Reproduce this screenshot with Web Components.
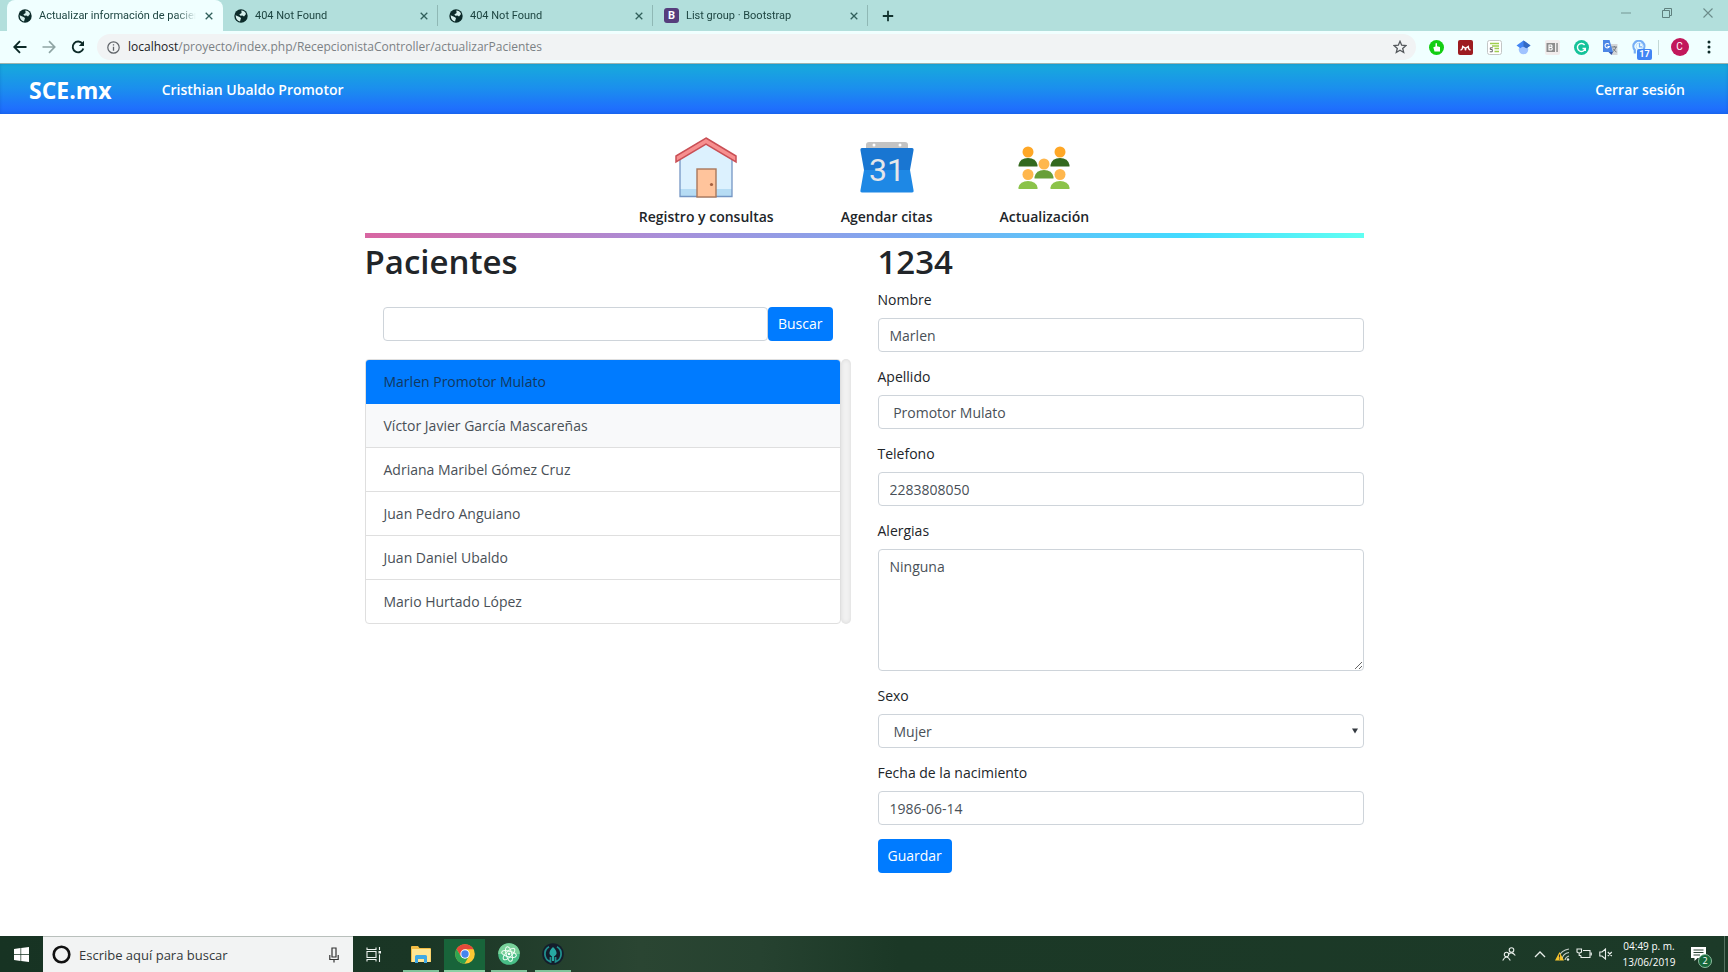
<!DOCTYPE html>
<html lang="es">
<head>
<meta charset="utf-8">
<meta name="viewport" content="width=device-width, initial-scale=1">
<title>Actualizar información de pacientes</title>
<style>
  html { height: 100%; }
  body {
    margin: 0;
    min-height: 100%;
    display: flex;
    flex-direction: column;
    background: #fff;
    color: #212529;
    font: 14px/22px "Open Sans", "Noto Sans", sans-serif;
  }
</style>
</head>
<body>

<browser-frame>
  <browser-tab active><web-globe slot="icon"></web-globe>Actualizar información de pacientes</browser-tab>
  <browser-tab><web-globe slot="icon"></web-globe>404 Not Found</browser-tab>
  <browser-tab><web-globe slot="icon"></web-globe>404 Not Found</browser-tab>
  <browser-tab><bootstrap-mark slot="icon"></bootstrap-mark>List group · Bootstrap</browser-tab>
</browser-frame>

<site-header brand="SCE.mx" user="Cristhian Ubaldo Promotor"></site-header>

<page-body>
  <section-link slot="sections" label="Registro y consultas">
    <svg width="62" height="64" viewBox="0 0 62 64">
      <path d="M5 21 31 4 57 21V60H5Z" fill="#dcf1fe"/>
      <path d="M5 53H57V60H5Z" fill="#b6dcf4"/>
      <path d="M5 21V60.500H57V21" fill="none" stroke="#7496c4" stroke-width="1.300"/>
      <rect x="22" y="33" width="19" height="28" fill="#ffc49c" stroke="#a9785c" stroke-width="1.400"/>
      <circle cx="36.500" cy="48.500" r="1.600" fill="#a4603f"/>
      <path d="M31 2 61 20V26L31 8 1 26V20Z" fill="#f78f8f" stroke="#c94f55" stroke-width="1.500"/>
    </svg>
  </section-link>
  <section-link slot="sections" label="Agendar citas">
    <svg width="54" height="64" viewBox="0 0 54 64">
      <path d="M6 16V9Q6 6 9 6H45Q48 6 48 9V16Z" fill="#c3c3c3"/>
      <circle cx="14" cy="9" r="1.500" fill="#fff"/><circle cx="40" cy="9" r="1.500" fill="#fff"/>
      <path d="M2 12H52Q54 12 53.500 14.500L50 34H4L.5 14.500Q0 12 2 12Z" fill="#1976d2"/>
      <path d="M4 34H50L53.500 54Q54 56.500 52 56.500H2Q0 56.500 .5 54Z" fill="#1e88e5"/>
      <text x="27" y="45" text-anchor="middle" font-family="Roboto, sans-serif" font-size="32" font-weight="400" fill="#e4e6ea">31</text>
    </svg>
  </section-link>
  <section-link slot="sections" label="Actualización">
    <svg width="52" height="64" viewBox="0 0 52 64">
      <g fill="#ffa726"><circle cx="10" cy="16" r="5.500"/><circle cx="42" cy="16" r="5.500"/></g>
      <g fill="#33691e"><path d="M.5 30.500V29Q2 22 10 22T19.500 29V30.500Z"/><path d="M32.500 30.500V29Q34 22 42 22T51.500 29V30.500Z"/></g>
      <g fill="#ffb74d"><circle cx="26" cy="28" r="5.500"/><circle cx="10" cy="38.500" r="5.500"/><circle cx="42" cy="38.500" r="5.500"/></g>
      <path d="M16.500 42.500V41Q18 34 26 34T35.500 41V42.500Z" fill="#689f38"/>
      <g fill="#8bc34a"><path d="M.5 53V51.500Q2 45 10 45T19.500 51.500V53Z"/><path d="M32.500 53V51.500Q34 45 42 45T51.500 51.500V53Z"/></g>
    </svg>
  </section-link>

  <patient-list slot="list" heading="Pacientes">
    <patient-item state="active">Marlen Promotor Mulato</patient-item>
    <patient-item state="hover">Víctor Javier García Mascareñas</patient-item>
    <patient-item>Adriana Maribel Gómez Cruz</patient-item>
    <patient-item>Juan Pedro Anguiano</patient-item>
    <patient-item>Juan Daniel Ubaldo</patient-item>
    <patient-item>Mario Hurtado López</patient-item>
  </patient-list>

  <patient-form slot="form" heading="1234">
    <form-field label="Nombre" value="Marlen"></form-field>
    <form-field label="Apellido" value=" Promotor Mulato"></form-field>
    <form-field label="Telefono" value="2283808050"></form-field>
    <form-field label="Alergias" kind="textarea" value="Ninguna"></form-field>
    <form-field label="Sexo" kind="select" value="Mujer"></form-field>
    <form-field label="Fecha de la nacimiento" value="1986-06-14"></form-field>
  </patient-form>
</page-body>

<task-bar></task-bar>

<script>
const RESET = `
  :host, *, *::before, *::after { box-sizing: border-box; }
  svg { display: block; flex: none; }
  button { font: inherit; color: inherit; border: 0; margin: 0; padding: 0; background: none; }
  a { color: inherit; text-decoration: none; }
`;

/* Base class: renders the styles and markup of each element into an open shadow root. */
class Base extends HTMLElement {
  connectedCallback() {
    if (this.shadowRoot) return;
    const root = this.attachShadow({ mode: 'open' });
    root.innerHTML = `<style>${RESET}${this.css()}</style>${this.html()}`;
  }
  attr(name) { return this.getAttribute(name) || ''; }
}

class WebGlobe extends Base {
  css() { return `:host { display: block; }`; }
  html() {
    return `<svg width="14" height="14" viewBox="0 0 14 14">
      <circle cx="7" cy="7" r="6.700" fill="#0c2b2a"/>
      <path d="M1.600 6.200 5.500 8 7 9 6 12.400Q2 11.500 1.600 6.200ZM7.300 1.600Q11 2 12 5L10 7.500 8.500 6.500 6.500 6.800 5.300 5.500 7.600 4Z" fill="#d5efec"/>
    </svg>`;
  }
}

class BootstrapMark extends Base {
  css() {
    return `:host { display: grid; place-items: center; width: 15px; height: 15px; border-radius: 3px;
      background: #563d7c; color: #fff; font-size: 11px; line-height: 15px; font-weight: 700; }`;
  }
  html() { return `<span>B</span>`; }
}

class BrowserTab extends Base {
  css() {
    return `
      :host { display: flex; align-items: center; flex: 0 1 215px; min-width: 0; height: 31px;
        padding: 0 6px 0 11px; gap: 6px; border-right: 1px solid transparent;
        color: #1d4541; font: 11px/16px Roboto, sans-serif;
        border-image: linear-gradient(transparent 6px, #8fb8b5 6px 25px, transparent 25px) 1; }
      :host([active]) { flex-basis: 216px; background: #f0ffff; border-image: none; border-radius: 8px 8px 0 0; }
      .title { flex: 1; min-width: 0; overflow: hidden; white-space: nowrap; margin-left: 1px;
        mask-image: linear-gradient(to right, #000 calc(100% - 20px), transparent); }
      button { width: 14px; height: 14px; display: grid; place-items: center; }
    `;
  }
  html() {
    return `<slot name="icon"></slot><span class="title"><slot></slot></span>
      <button type="button" aria-label="Cerrar pestaña"><svg width="8" height="8" viewBox="0 0 8 8"><path d="M.7.7 7.300 7.300M7.300.7.7 7.300" stroke="#31605b" stroke-width="1.300"/></svg></button>`;
  }
}

class BrowserFrame extends Base {
  css() {
    return `
      :host { display: block; background: #f0ffff; border-bottom: 1px solid #9db4ae; }
      .strip { display: flex; height: 31px; background: #b2dfdc; padding-left: 7px; }
      .new { width: 40px; display: grid; place-items: center; }
      .window { margin-left: auto; display: flex; height: 26px; }
      .window button { width: 41px; display: grid; place-items: center; }
      .bar { display: flex; align-items: center; height: 32px; padding: 0 5px; }
      .bar > button { width: 29px; height: 29px; display: grid; place-items: center; flex: none; position: relative; }
      .address { flex: 1; min-width: 0; height: 26px; margin: 0 6px 0 5px; padding: 0 9px 0 10px; border-radius: 13px;
        background: #f1f3f4; display: flex; align-items: center; gap: 8px; }
      .url { flex: 1; min-width: 0; font-size: 12px; line-height: 18px; color: #7b8184; white-space: nowrap; overflow: hidden; }
      .url b { font-weight: 400; color: #202124; }
      .rule { width: 1px; height: 15px; background: #c3d8d6; margin: 0 6px 0 4px; }
      .badge { position: absolute; left: 12px; top: 16px; width: 15px; height: 11px; border-radius: 2px;
        background: #4285f4; color: #fff; font: 700 9px/11px Roboto, sans-serif; text-align: center; }
      .avatar { width: 18px; height: 18px; border-radius: 50%; background: #c2185b; color: #fff;
        font: 10px/18px Roboto, sans-serif; text-align: center; }
    `;
  }
  html() {
    return `
    <div class="strip"><slot></slot>
      <button class="new" type="button" aria-label="Nueva pestaña"><svg width="12" height="12" viewBox="0 0 12 12"><path d="M6 .8V11.200M.8 6H11.200" stroke="#12332f" stroke-width="1.800"/></svg></button>
      <div class="window">
        <button type="button" aria-label="Minimizar"><svg width="10" height="10" viewBox="0 0 10 10"><path d="M0 5H10" stroke="#7fa3a0" stroke-width="1.200"/></svg></button>
        <button type="button" aria-label="Restaurar"><svg width="10" height="10" viewBox="0 0 10 10" fill="none" stroke="#5f807e" stroke-width="1"><path d="M.5 2.500H7.500V9.500H.5ZM2.500 2.500V.5H9.500V7.500H7.500"/></svg></button>
        <button type="button" aria-label="Cerrar"><svg width="10" height="10" viewBox="0 0 10 10"><path d="M.5.5 9.500 9.500M9.500.5.5 9.500" stroke="#6b8c8a" stroke-width="1.100"/></svg></button>
      </div>
    </div>
    <div class="bar">
      <button type="button" aria-label="Atrás"><svg width="14" height="14" viewBox="0 0 14 14" fill="none" stroke="#0d2b28" stroke-width="1.900"><path d="M13.500 7H1.500M7 1.200 1.300 7 7 12.800"/></svg></button>
      <button type="button" aria-label="Adelante"><svg width="14" height="14" viewBox="0 0 14 14" fill="none" stroke="#8fa5a4" stroke-width="1.700"><path d="M.5 7H12.500M7 1.200 12.700 7 7 12.800"/></svg></button>
      <button type="button" aria-label="Recargar"><svg width="14" height="14" viewBox="0 0 14 14"><path d="M11.500 3.800A5.400 5.400 0 1 0 12.300 8.500" fill="none" stroke="#0d2b28" stroke-width="1.900"/><path d="M13 .8V6H7.800Z" fill="#0d2b28"/></svg></button>
      <div class="address">
        <svg width="13" height="13" viewBox="0 0 13 13"><circle cx="6.500" cy="6.500" r="5.700" fill="none" stroke="#5f6368" stroke-width="1.200"/><path d="M6.500 5.800V9.800M6.500 3.200V4.600" stroke="#5f6368" stroke-width="1.300"/></svg>
        <span class="url"><b>localhost</b>/proyecto/index.php/RecepcionistaController/actualizarPacientes</span>
        <svg width="14" height="14" viewBox="0 0 14 14"><path d="M7 1.300 8.700 5.200 12.900 5.600 9.700 8.400 10.700 12.500 7 10.300 3.300 12.500 4.300 8.400 1.100 5.600 5.300 5.200Z" fill="none" stroke="#54585c" stroke-width="1.300"/></svg>
      </div>
      <button type="button" aria-label="Extensión me gusta"><svg width="15" height="15" viewBox="0 0 15 15"><circle cx="7.500" cy="7.500" r="7.500" fill="#12ce12"/><path d="M4.300 7.200 6.500 6.500V3.500Q7.300 2.500 8 3.500V6.300L11 7V11.500H5.500Z" fill="#fff"/></svg></button>
      <button type="button" aria-label="Mendeley"><svg width="15" height="15" viewBox="0 0 15 15"><rect width="15" height="15" rx="2" fill="#9d1c20"/><path d="M2.500 10Q4.500 9.800 4.800 6.500L7.500 8.300 10.200 6.500Q10.500 9.800 12.500 10" fill="none" stroke="#fff" stroke-width="1.500"/><circle cx="7.500" cy="9.600" r="1" fill="#fff"/></svg></button>
      <button type="button" aria-label="Extensión de citas"><svg width="15" height="15" viewBox="0 0 15 15"><rect x=".5" y=".5" width="14" height="14" rx="2" fill="#fff" stroke="#c3c6c6"/><path d="M3 3.500H12M5 6H12M7.500 8.500H12M7.500 11.500H12" stroke="#9fce4e" stroke-width="1.300"/><path d="M5.800 7.800H3.300V9.500H5.300V11.800H2.800" fill="none" stroke="#555" stroke-width=".9"/></svg></button>
      <button type="button" aria-label="Académico"><svg width="15" height="15" viewBox="0 0 15 15"><circle cx="7.500" cy="9.500" r="4.800" fill="#a0c3ff"/><path d="M7.500.5 14.500 5.500 10.500 8.200Q7.500 5.500 4.500 8.200L.5 5.500Z" fill="#4285f4"/><path d="M7.500.5 14.500 5.500 10.500 8.200 7.500 6.800Z" fill="#356ac3"/></svg></button>
      <button type="button" aria-label="Extensión B"><svg width="15" height="15" viewBox="0 0 15 15"><rect width="15" height="15" rx="2" fill="#f1eded"/><path d="M1.500 3H10V12H1.500ZM11.300 3H12.800V12H11.300Z" fill="#8d8d8d"/><path d="M4 5H6.300Q7.800 6.200 6.300 7.400 8.200 8.700 6.300 10H4ZM4 7.400H6.300" fill="none" stroke="#fff" stroke-width="1.100"/></svg></button>
      <button type="button" aria-label="Grammarly"><svg width="15" height="15" viewBox="0 0 15 15"><circle cx="7.500" cy="7.500" r="7.500" fill="#15c39a"/><path d="M10.600 5A4 4 0 1 0 11.300 8.500H8.500M11.300 8.300V11" fill="none" stroke="#fff" stroke-width="1.400"/></svg></button>
      <button type="button" aria-label="Traductor"><svg width="15" height="15" viewBox="0 0 15 15"><path d="M6 4H14.500V15H9Z" fill="#d4d7d9"/><path d="M8.500 7H14M11.300 6V7M13 7Q12 10.500 9.500 12M10 8.500Q11.500 11 13.500 12" fill="none" stroke="#687078" stroke-width=".9"/><path d="M0 0H6.500L10 12H0Z" fill="#4c87e6"/><path d="M5.500 12H10L8.500 15Z" fill="#3455a8"/><path d="M6 4.300A2.200 2.200 0 1 0 6.300 6.500H4.500" fill="none" stroke="#fff" stroke-width="1.100"/></svg></button>
      <button type="button" aria-label="Historial"><svg width="15" height="15" viewBox="0 0 15 15"><path d="M2.800 13.500V10A5.500 5.500 0 1 1 11 10" fill="none" stroke="#75aef5" stroke-width="2.200"/><path d="M7.500 3V6.800H10" fill="none" stroke="#75aef5" stroke-width="1.300"/><circle cx="7.500" cy="6.300" r="3.400" fill="none" stroke="#b6d5fb" stroke-width=".8"/></svg><span class="badge">17</span></button>
      <span class="rule"></span>
      <button type="button" aria-label="Perfil"><span class="avatar">C</span></button>
      <button type="button" aria-label="Menú"><svg width="4" height="14" viewBox="0 0 4 14" fill="#0d2b28"><circle cx="2" cy="2" r="1.500"/><circle cx="2" cy="7" r="1.500"/><circle cx="2" cy="12" r="1.500"/></svg></button>
    </div>`;
  }
}

class SiteHeader extends Base {
  css() {
    return `
      :host { display: flex; align-items: center; height: 50px; padding: 2px 43px 0 29px;
        background: linear-gradient(#17abdb, #1b8eee 50%, #1f70fd 88%, #1c69f8);
        box-shadow: inset 0 0 3px rgba(0, 60, 150, .25); color: #fff; font-weight: 600; }
      .brand { font-size: 23px; line-height: 30px; font-weight: 700; margin-right: 50px; }
      .exit { margin-left: auto; }
    `;
  }
  html() {
    return `<a class="brand" href="#inicio">${this.attr('brand')}</a>
      <a href="#perfil">${this.attr('user')}</a><a class="exit" href="#salir">Cerrar sesión</a>`;
  }
}

class PageBody extends Base {
  css() {
    return `
      :host { display: block; flex: 1 0 auto; padding-bottom: 60px; }
      main { max-width: 999px; margin: 0 auto; }
      nav { display: flex; justify-content: center; gap: 67px; padding: 22px 0 5px; }
      hr { height: 5px; margin: 0 0 2px; border: 0;
        background: linear-gradient(to right, #d866a2, #a88fd9 30%, #7da9f1 54%, #42dbff 82%, #60fff2); }
      .columns { display: grid; grid-template-columns: 1fr 1fr; gap: 27px; align-items: start; }
    `;
  }
  html() {
    return `<main><nav><slot name="sections"></slot></nav><hr>
      <div class="columns"><slot name="list"></slot><slot name="form"></slot></div></main>`;
  }
}

class SectionLink extends Base {
  css() {
    return `:host { display: block; }
      a { display: flex; flex-direction: column; align-items: center; gap: 6px; font-weight: 600; }`;
  }
  html() { return `<a href="#seccion"><slot></slot><span>${this.attr('label')}</span></a>`; }
}

const HEADING = `h1 { margin: 0; font-size: 33px; line-height: 43px; font-weight: 600; }`;
const CONTROL = `
  .control { width: 100%; height: 34px; padding: 1px 11px 0; border: 1px solid #ced4da; border-radius: 4px;
    background: #fff; color: #495057; font: inherit; display: block; margin: 0; outline: 0; }
  .primary { height: 34px; padding: 0 10px; border-radius: 4px; background: #007bff; color: #fff; }
`;

class PatientList extends Base {
  css() {
    return `
      :host { display: block; min-width: 0; }
      ${HEADING}${CONTROL}
      form { display: flex; margin: 24px 18px 18px; }
      form .control { flex: 1; min-width: 0; }
      .scroller { display: flex; }
      .items { flex: 1; min-width: 0; border: 1px solid #dfdfdf; border-radius: 4px; overflow: hidden; }
      .track { width: 10px; border-radius: 5px; background: #f1f1f1; box-shadow: inset 0 0 4px rgba(0, 0, 0, .1); }
    `;
  }
  html() {
    return `<h1>${this.attr('heading')}</h1>
      <form><input class="control" type="text" aria-label="Buscar paciente"><button class="primary" type="button">Buscar</button></form>
      <div class="scroller"><div class="items"><slot></slot></div><div class="track"></div></div>`;
  }
}

class PatientItem extends Base {
  css() {
    return `
      :host { display: block; border-bottom: 1px solid #dfdfdf; }
      :host(:last-child) { border-bottom: 0; }
      a { display: block; padding: 11px 18px 10px; color: #495057; }
      :host([state="active"]) { margin: -1px -1px 0; border: 1px solid #007bff; background: #007bff; }
      :host([state="active"]) a { color: #12385e; }
      :host([state="hover"]) { background: #f8f9fa; }
    `;
  }
  html() { return `<a href="#paciente"><slot></slot></a>`; }
}

class PatientForm extends Base {
  css() {
    return `
      :host { display: block; min-width: 0; }
      ${HEADING}${CONTROL}
      form { display: flex; flex-direction: column; gap: 14px; padding-top: 6px; }
      button { align-self: flex-start; }
    `;
  }
  html() {
    return `<h1>${this.attr('heading')}</h1>
      <form><slot></slot><button class="primary" type="button">Guardar</button></form>`;
  }
}

class FormField extends Base {
  css() {
    return `
      :host { display: block; }
      ${CONTROL}
      label { display: block; margin-bottom: 7px; }
      textarea.control { height: 122px; padding: 6px 11px; resize: vertical; }
      select.control { appearance: none; padding: 1px 15px 0; }
      .box { position: relative; }
      .box svg { position: absolute; right: 6px; top: 14px; pointer-events: none; }
    `;
  }
  html() {
    const v = this.attr('value'), kind = this.attr('kind');
    let control = `<input id="c" class="control" type="text" value="${v}">`;
    if (kind === 'textarea') control = `<textarea id="c" class="control">${v}</textarea>`;
    if (kind === 'select') control = `<select id="c" class="control"><option>${v}</option><option>Hombre</option></select>
      <svg width="6" height="6" viewBox="0 0 6 6"><path d="M0 .5H6L3 5.500Z" fill="#343a40"/></svg>`;
    return `<label for="c">${this.attr('label')}</label><div class="box">${control}</div>`;
  }
}

class TaskBar extends Base {
  css() {
    return `
      :host { display: flex; height: 36px; color: #fff;
        background: linear-gradient(to right, #173323, #1a3625 24%, #2a4532 37%, #264230 44%, #1b3826 52%, #1c3a28); }
      button { display: grid; place-items: center; }
      .start { width: 43px; }
      .search { width: 310px; display: flex; align-items: center; gap: 8px; padding: 0 14px 0 9px;
        background: #f2f3f3; border-top: 1px solid #b9c0bc; }
      input { flex: 1; min-width: 0; padding: 0; border: 0; outline: 0; background: none; font: inherit; font-size: 13px; }
      input::placeholder { color: #33383a; opacity: 1; }
      .view { width: 42px; }
      .apps { display: flex; gap: 3px; margin-left: 5px; }
      .apps button { width: 41px; background: linear-gradient(#7fc39a, #7fc39a) bottom / 36px 2px no-repeat; }
      .apps .on { background: linear-gradient(#8ad0a4, #8ad0a4) bottom / 100% 2px no-repeat,
        linear-gradient(transparent 3px, #18643a 3px); }
      .tray { margin-left: auto; display: flex; }
      .tray button { width: 22px; }
      .tray .people { width: 24px; margin-right: 8px; }
      .tray .clock { width: 64px; display: block; padding-bottom: 1px; font-size: 10px; line-height: 16px; text-align: center; }
      .tray .notes { width: 34px; position: relative; }
      .count { position: absolute; left: 17px; top: 18px; width: 14px; height: 14px; border-radius: 50%;
        background: #16673a; border: 1px solid #8dbda0; font-size: 9px; line-height: 12px; text-align: center; }
      .desk { width: 4px; border-left: 1px solid #557060; margin-left: 9px; }
    `;
  }
  html() {
    return `
    <button class="start" type="button" aria-label="Inicio"><svg width="15" height="15" viewBox="0 0 15 15" fill="#fff"><path d="M0 2 6.500 1V7H0ZM7.200 .9 15 0V7H7.200ZM0 7.800H6.500V14L0 13ZM7.200 7.800H15V15L7.200 14.100Z"/></svg></button>
    <div class="search">
      <svg width="19" height="19" viewBox="0 0 19 19"><circle cx="9.500" cy="9.500" r="7.800" fill="none" stroke="#111" stroke-width="2.600"/></svg>
      <input type="text" aria-label="Buscar en Windows" placeholder="Escribe aquí para buscar">
      <svg width="10" height="16" viewBox="0 0 10 16" fill="none" stroke="#333" stroke-width="1.200"><path d="M3 1H7V10H3ZM.8 8V12.500H9.200V8M5 12.500V15.500"/></svg>
    </div>
    <button class="view" type="button" aria-label="Vista de tareas"><svg width="16" height="15" viewBox="0 0 16 15" fill="none" stroke="#eef3f0" stroke-width="1.100"><path d="M1 4.500H10V10.500H1ZM1 .5V2.500H10V.5M1 14.500V12.500H10V14.500M13.500 0V3M13.500 7.500V15"/><path d="M12.500 4H15V6.500H12.500Z" fill="#eef3f0" stroke="none"/></svg></button>
    <div class="apps">
      <button type="button" aria-label="Explorador de archivos"><svg width="20" height="17" viewBox="0 0 20 17"><path d="M0 1Q0 0 1 0H7L8.500 2H19Q20 2 20 3V16H0Z" fill="#f3bd45"/><path d="M1 3H19.500V16H1Z" fill="#ffe694"/><path d="M4 17V10.500Q4 9 5.500 9H14.500Q16 9 16 10.500V17H13V13H7V17Z" fill="#3fa9e4"/></svg></button>
      <button class="on" type="button" aria-label="Chrome"><svg width="20" height="20" viewBox="0 0 20 20"><circle cx="10" cy="10" r="9.800" fill="#fcc934"/><path d="M1.500 5A9.800 9.800 0 0 1 18.500 5.200H10L6 12.500Z" fill="#e5493a"/><path d="M1.500 5A9.800 9.800 0 0 0 9.500 19.800L13.800 12.500 6 12.500Z" fill="#2fa452"/><circle cx="10" cy="10" r="4.700" fill="#fff"/><circle cx="10" cy="10" r="3.700" fill="#4584ee"/></svg></button>
      <button type="button" aria-label="Atom"><svg width="22" height="22" viewBox="0 0 22 22"><circle cx="11" cy="11" r="10.800" fill="#48bd86"/><path d="M.2 11A10.800 10.800 0 0 1 21.800 11Z" fill="#7ad19a"/><g fill="none" stroke="#f1fff6" stroke-width="1"><ellipse cx="11" cy="11" rx="7.500" ry="2.800" transform="rotate(15 11 11)"/><ellipse cx="11" cy="11" rx="7.500" ry="2.800" transform="rotate(75 11 11)"/><ellipse cx="11" cy="11" rx="7.500" ry="2.800" transform="rotate(135 11 11)"/></g><circle cx="11" cy="11" r="1.300" fill="#fff"/></svg></button>
      <button type="button" aria-label="GitKraken"><svg width="22" height="22" viewBox="0 0 22 22"><circle cx="11" cy="11" r="10.800" fill="#141d2b"/><path d="M7 3.800A8.300 8.300 0 0 0 8.500 18.800V14M15 3.800A8.300 8.300 0 0 1 13.500 18.800V14" fill="none" stroke="#1f8f8d" stroke-width="1.800"/><path d="M11 4Q15 7.500 14.500 11 13 13 12 13.500V18H10V13.500Q9 13 7.500 11 7 7.500 11 4Z" fill="#27a9a3"/></svg></button>
    </div>
    <div class="tray">
      <button class="people" type="button" aria-label="Contactos"><svg width="14" height="14" viewBox="0 0 14 14" fill="none" stroke="#e8eeea" stroke-width="1.100"><circle cx="9.500" cy="3" r="2.300"/><path d="M6.500 7.500Q9.500 3.800 13.300 8.500"/><circle cx="4.500" cy="7.500" r="2.200"/><path d="M.7 13.500Q4.500 6.500 8.300 13.500"/></svg></button>
      <button type="button" aria-label="Iconos ocultos"><svg width="12" height="7" viewBox="0 0 12 7"><path d="M1 6 6 1 11 6" fill="none" stroke="#e8eeea" stroke-width="1.300"/></svg></button>
      <button type="button" aria-label="Red"><svg width="16" height="14" viewBox="0 0 16 14"><g fill="none" stroke="#c4cec8" stroke-width="1.200"><path d="M5 9.500Q7 3.500 15 2M8 12Q9 6.500 15 5.500M11 13Q11.500 10 15 9"/></g><circle cx="14" cy="12.500" r="1.200" fill="#e8eeea"/><path d="M5.500 5 10 13.500H1Z" fill="#f8c52c"/><path d="M5.500 7.500V10.500M5.500 11.400V12.600" stroke="#333" stroke-width="1.100"/></svg></button>
      <button type="button" aria-label="Batería"><svg width="16" height="12" viewBox="0 0 16 12" fill="none" stroke="#e8eeea" stroke-width="1.100"><path d="M7 2.500H14V9.500H5V7.500M15.300 4.500V7.500M1 1H5.500V4Q3.300 6 1 4ZM3.200 5V7.500H5"/></svg></button>
      <button type="button" aria-label="Volumen"><svg width="14" height="12" viewBox="0 0 14 12" fill="none" stroke="#e8eeea" stroke-width="1.100"><path d="M.8 4H3L6.500 1V11L3 8H.8ZM8.800 4 12.800 8M12.800 4 8.800 8"/></svg></button>
      <button class="clock" type="button"><span>04:49 p. m.</span><br><span>13/06/2019</span></button>
      <button class="notes" type="button" aria-label="Notificaciones"><svg width="15" height="15" viewBox="0 0 15 15"><path d="M0 0H15V11H6.500L3.500 14V11H0Z" fill="#fff"/><path d="M2.500 3H12.500M2.500 5.500H12.500M2.500 8H9" stroke="#2a4535" stroke-width="1"/></svg><span class="count">2</span></button>
      <span class="desk"></span>
    </div>`;
  }
}

const registry = {
  'web-globe': WebGlobe, 'bootstrap-mark': BootstrapMark, 'browser-tab': BrowserTab, 'browser-frame': BrowserFrame,
  'site-header': SiteHeader, 'page-body': PageBody, 'section-link': SectionLink, 'patient-list': PatientList,
  'patient-item': PatientItem, 'patient-form': PatientForm, 'form-field': FormField, 'task-bar': TaskBar
};
for (const [name, cls] of Object.entries(registry)) customElements.define(name, cls);
</script>
</body>
</html>
